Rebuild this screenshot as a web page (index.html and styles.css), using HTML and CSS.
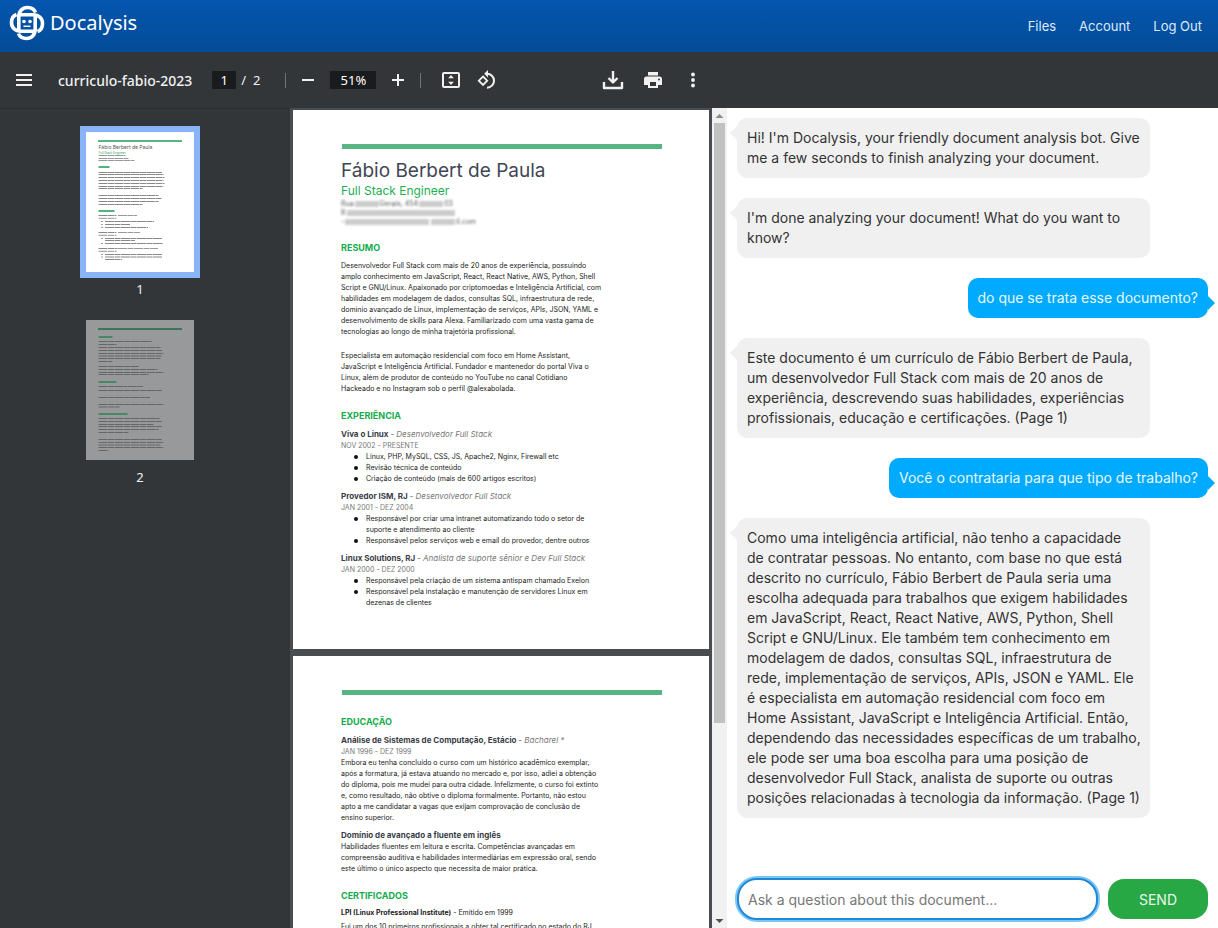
FILE: index.html
```html
<!DOCTYPE html>
<html lang="pt-BR">
<head>
<meta charset="utf-8">
<meta name="viewport" content="width=device-width, initial-scale=1">
<title>Docalysis</title>
<link rel="stylesheet" href="styles.css">
</head>
<body>
<div class="app">
  <header class="topbar">
    <a class="brand" href="#">
      <svg class="brand-logo" viewBox="0 0 36 36" aria-hidden="true">
        <defs><path id="arm" d="M9.800 25.500V12C9.800 6 13.500 2.500 18.500 2.500c4 0 6.800 1.600 8 5"/></defs>
        <g fill="none" stroke="#fff" stroke-width="3.600">
          <use href="#arm"/>
          <use href="#arm" transform="rotate(90 18 18)"/>
          <use href="#arm" transform="rotate(180 18 18)"/>
          <use href="#arm" transform="rotate(270 18 18)"/>
        </g>
        <circle cx="15" cy="16.500" r="1.800" fill="#fff"/>
        <circle cx="21" cy="16.500" r="1.800" fill="#fff"/>
        <path d="M14.500 21.300h7" stroke="#fff" stroke-width="1.500"/>
      </svg>
      <span>Docalysis</span>
    </a>
    <nav class="topnav">
      <a href="#">Files</a>
      <a href="#">Account</a>
      <a href="#">Log Out</a>
    </nav>
  </header>

  <div class="toolbar">
    <div class="toolbar-inner">
      <div class="tool-left">
        <button class="icon-btn" aria-label="Menu"><svg viewBox="0 0 24 24"><path d="M4 7h16M4 12h16M4 17h16" stroke="currentColor" stroke-width="2"/></svg></button>
        <span class="doc-name">curriculo-fabio-2023</span>
      </div>
      <div class="tool-center">
        <input class="page-input" value="1" aria-label="Page number">
        <span class="page-total">/&nbsp; 2</span>
        <span class="divider"></span>
        <button class="icon-btn" aria-label="Zoom out"><svg viewBox="0 0 24 24"><path d="M6 12h12" stroke="currentColor" stroke-width="2"/></svg></button>
        <input class="zoom-input" value="51%" aria-label="Zoom level">
        <button class="icon-btn" aria-label="Zoom in"><svg viewBox="0 0 24 24"><path d="M6 12h12M12 6v12" stroke="currentColor" stroke-width="2"/></svg></button>
        <span class="divider"></span>
        <button class="icon-btn fit" aria-label="Fit to page"><svg viewBox="0 0 24 24"><rect x="4" y="5" width="16" height="14" rx="1" fill="none" stroke="currentColor" stroke-width="2"/><path d="M12 7l2.800 3.300H9.200zM12 17l2.800-3.300H9.200z" fill="currentColor"/></svg></button>
        <button class="icon-btn" aria-label="Rotate"><svg viewBox="0 0 24 24"><path d="M8 8.500l4.200 4.200L8 17l-4.200-4.300z" fill="none" stroke="currentColor" stroke-width="1.800"/><path d="M12 5.700a7 7 0 1 1 0 14" fill="none" stroke="currentColor" stroke-width="2"/><path d="M13 2v7.400L9.200 5.700z" fill="currentColor"/></svg></button>
      </div>
      <div class="tool-right">
        <button class="icon-btn" aria-label="Download"><svg viewBox="0 0 24 24"><path d="M12 3v11M7.500 10l4.500 4.500 4.500-4.500M3 14v6h18v-6" fill="none" stroke="currentColor" stroke-width="2.400" stroke-linejoin="round"/></svg></button>
        <button class="icon-btn" aria-label="Print"><svg viewBox="0 0 24 24"><path fill="currentColor" fill-rule="evenodd" d="M7 4h10v3.500H7zM5.500 8.500h13a2.500 2.500 0 0 1 2.500 2.500v6h-4v3H7v-3H3v-6a2.500 2.500 0 0 1 2.500-2.500zM9 14v4h6v-4zM18 10.500a1 1 0 1 0 0 2 1 1 0 0 0 0-2z"/></svg></button>
        <button class="icon-btn" aria-label="More"><svg viewBox="0 0 24 24"><g fill="currentColor"><circle cx="12" cy="6.500" r="1.900"/><circle cx="12" cy="12" r="1.900"/><circle cx="12" cy="17.500" r="1.900"/></g></svg></button>
      </div>
    </div>
  </div>

  <main class="workspace">
    <aside class="thumbs">
      <figure class="thumb thumb-active">
        <svg class="thumb-page" viewBox="0 0 108 140" role="img" aria-label="Page 1">
          <rect width="108" height="140" fill="#fff"/>
          <rect x="12" y="8" width="84" height="2" fill="#57b584"/>
          <text x="12.500" y="17" class="mini-name">Fábio Berbert de Paula</text>
          <text x="12.500" y="22" class="mini-role">Full Stack Engineer</text>
          <g class="mini-lines">
            <path stroke="#999" d="M12.500 23.500h27M12.500 26.500h30M12.500 28.500h36M12.500 86.300h18M12.500 103.300h18M12.500 119.300h18M32 83.500h19M32 100.500h22M32 116.500h40"/>
            <path class="mini-head" d="M12.500 35h11M12.500 79h16"/>
            <path d="M12.500 40.500h64M12.500 42.500h65M12.500 45.500h66M12.500 48.500h65M12.500 51.500h66M12.500 54.500h65M12.500 56.500h44M12.500 63.500h60M12.500 66.500h63M12.500 69.500h60M12.500 72.500h44M12.500 83.500h18M19 89.500h49M19 92.500h25M19 95.500h43M12.500 100.500h18M19 106.500h57M19 108.500h30M19 111.500h58M12.500 116.500h19M19 122.500h57M19 125h57M19 127.500h17"/>
          </g>
          <path stroke="#444" d="M15.500 89.500h1M15.500 92.500h1M15.500 95.500h1M15.500 106.500h1M15.500 111.500h1M15.500 122.500h1M15.500 125h1"/>
        </svg>
        <figcaption>1</figcaption>
      </figure>
      <figure class="thumb">
        <svg class="thumb-page" viewBox="0 0 108 140" role="img" aria-label="Page 2">
          <rect width="108" height="140" fill="#98999b"/>
          <rect x="12" y="8" width="84" height="2" fill="#3f7558"/>
          <g class="mini-lines mini-dim">
            <path class="mini-head" d="M12.500 17h14M12.500 62h18M12.500 94h29"/>
            <path stroke="#666" d="M12.500 24.500h18M55 21.500h11M42 66.500h15M44 77.500h20"/>
            <path d="M12.500 21.500h43M12.500 27.500h62M12.500 30.500h64M12.500 33.500h65M12.500 36h63M12.500 38.500h62M12.500 41.500h14M12.500 46.500h40M12.500 49.500h59M12.500 52.500h65M12.500 54.500h50M12.500 66.500h29M12.500 70.500h64M12.500 77.500h31M12.500 84.500h65M12.500 87h21M12.500 98.500h61M12.500 101.500h64M12.500 104.500h55M12.500 106.500h64M12.500 109.500h60M12.500 112.500h30M12.500 119.500h63M12.500 122.500h65M12.500 125h62M12.500 127.500h65M12.500 130.500h10"/>
          </g>
        </svg>
        <figcaption>2</figcaption>
      </figure>
    </aside>

    <section class="viewer">
      <div class="pages">
        <article class="page">
          <div class="rule"></div>
          <h1 class="name">Fábio Berbert de Paula</h1>
          <p class="role">Full Stack Engineer</p>
          <div class="redacted" aria-hidden="true">
            <div>Rua<i class="w24"></i>Gerais, 454<i class="w24"></i>03</div>
            <div>R<i class="w108"></i></div>
            <div>-<i class="w80"></i><i class="w24"></i>il.com</div>
          </div>
          <h2 class="section">RESUMO</h2>
          <p class="body-text">Desenvolvedor Full Stack com mais de 20 anos de experiência, possuindo<br>amplo conhecimento em JavaScript, React, React Native, AWS, Python, Shell<br>Script e GNU/Linux. Apaixonado por criptomoedas e Inteligência Artificial, com<br>habilidades em modelagem de dados, consultas SQL, infraestrutura de rede,<br>domínio avançado de Linux, implementação de serviços, APIs, JSON, YAML e<br>desenvolvimento de skills para Alexa. Familiarizado com uma vasta gama de<br>tecnologias ao longo de minha trajetória profissional.</p>
          <p class="body-text second">Especialista em automação residencial com foco em Home Assistant,<br>JavaScript e Inteligência Artificial. Fundador e mantenedor do portal Viva o<br>Linux, além de produtor de conteúdo no YouTube no canal Cotidiano<br>Hackeado e no Instagram sob o perfil @alexabolada.</p>
          <h2 class="section">EXPERIÊNCIA</h2>
          <h3 class="job">Viva o Linux <em>- Desenvolvedor Full Stack</em></h3>
          <p class="dates">NOV 2002 - PRESENTE</p>
          <ul class="tasks">
            <li>Linux, PHP, MySQL, CSS, JS, Apache2, Nginx, Firewall etc</li>
            <li>Revisão técnica de conteúdo</li>
            <li>Criação de conteúdo (mais de 600 artigos escritos)</li>
          </ul>
          <h3 class="job">Provedor ISM, RJ <em>- Desenvolvedor Full Stack</em></h3>
          <p class="dates">JAN 2001 - DEZ 2004</p>
          <ul class="tasks">
            <li>Responsável por criar uma intranet automatizando todo o setor de<br>suporte e atendimento ao cliente</li>
            <li>Responsável pelos serviços web e email do provedor, dentre outros</li>
          </ul>
          <h3 class="job">Linux Solutions, RJ <em>- Analista de suporte sênior e Dev Full Stack</em></h3>
          <p class="dates">JAN 2000 - DEZ 2000</p>
          <ul class="tasks">
            <li>Responsável pela criação de um sistema antispam chamado Exelon</li>
            <li>Responsável pela instalação e manutenção de servidores Linux em<br>dezenas de clientes</li>
          </ul>
        </article>
        <article class="page">
          <div class="rule"></div>
          <h2 class="section">EDUCAÇÃO</h2>
          <h3 class="job">Análise de Sistemas de Computação, Estácio <em>- Bacharel *</em></h3>
          <p class="dates">JAN 1996 - DEZ 1999</p>
          <p class="body-text">Embora eu tenha concluído o curso com um histórico acadêmico exemplar,<br>após a formatura, já estava atuando no mercado e, por isso, adiei a obtenção<br>do diploma, pois me mudei para outra cidade. Infelizmente, o curso foi extinto<br>e, como resultado, não obtive o diploma formalmente. Portanto, não estou<br>apto a me candidatar a vagas que exijam comprovação de conclusão de<br>ensino superior.</p>
          <h3 class="job">Domínio de avançado a fluente em inglês</h3>
          <p class="body-text">Habilidades fluentes em leitura e escrita. Competências avançadas em<br>compreensão auditiva e habilidades intermediárias em expressão oral, sendo<br>este último o único aspecto que necessita de maior prática.</p>
          <h2 class="section">CERTIFICADOS</h2>
          <p class="cert"><b>LPI (Linux Professional Institute)</b> - Emitido em 1999</p>
          <p class="body-text">Fui um dos 10 primeiros profissionais a obter tal certificado no estado do RJ.</p>
        </article>
      </div>
      <div class="scrollbar" aria-hidden="true">
        <svg viewBox="0 0 15 15"><path d="M3.500 10h8l-4-4z" fill="#8b8b8b"/></svg>
        <div class="scroll-track"><div class="scroll-thumb"></div></div>
        <svg viewBox="0 0 15 15"><path d="M3.500 6h8l-4 4z" fill="#505050"/></svg>
      </div>
    </section>

    <section class="chat">
      <div class="messages">
        <p class="msg bot">Hi! I'm Docalysis, your friendly document analysis bot. Give<br>me a few seconds to finish analyzing your document.</p>
        <p class="msg bot">I'm done analyzing your document! What do you want to<br>know?</p>
        <p class="msg user">do que se trata esse documento?</p>
        <p class="msg bot">Este documento é um currículo de Fábio Berbert de Paula,<br>um desenvolvedor Full Stack com mais de 20 anos de<br>experiência, descrevendo suas habilidades, experiências<br>profissionais, educação e certificações. (Page 1)</p>
        <p class="msg user">Você o contrataria para que tipo de trabalho?</p>
        <p class="msg bot">Como uma inteligência artificial, não tenho a capacidade<br>de contratar pessoas. No entanto, com base no que está<br>descrito no currículo, Fábio Berbert de Paula seria uma<br>escolha adequada para trabalhos que exigem habilidades<br>em JavaScript, React, React Native, AWS, Python, Shell<br>Script e GNU/Linux. Ele também tem conhecimento em<br>modelagem de dados, consultas SQL, infraestrutura de<br>rede, implementação de serviços, APIs, JSON e YAML. Ele<br>é especialista em automação residencial com foco em<br>Home Assistant, JavaScript e Inteligência Artificial. Então,<br>dependendo das necessidades específicas de um trabalho,<br>ele pode ser uma boa escolha para uma posição de<br>desenvolvedor Full Stack, analista de suporte ou outras<br>posições relacionadas à tecnologia da informação. (Page 1)</p>
      </div>
      <form class="composer">
        <input class="question" type="text" placeholder="Ask a question about this document..." aria-label="Ask a question about this document" autofocus>
        <button class="send" type="button">SEND</button>
      </form>
    </section>
  </main>
</div>
</body>
</html>
```
FILE: styles.css
```css
* { box-sizing: border-box; }
body { margin: 0; font-family: Inter, "Liberation Sans", sans-serif; }
h1, h2, h3, p, ul, figure { margin: 0; padding: 0; }
button, input { font-family: inherit; border: 0; padding: 0; margin: 0; }

.app { height: 100vh; display: flex; flex-direction: column; overflow: hidden; }

.topbar {
  display: flex; align-items: center; justify-content: space-between;
  flex: none; height: 52px; padding: 0 16px 0 9px;
  background: linear-gradient(#0456b0, #044b96);
}
.brand {
  display: flex; align-items: center; gap: 5px; padding-bottom: 6px;
  color: #fff; text-decoration: none;
  font: 20px/28px "Noto Sans", Verdana, sans-serif;
}
.brand-logo { width: 36px; height: 36px; }
.topnav { display: flex; gap: 23px; }
.topnav a { color: #dcebfa; font-size: 13px; text-decoration: none; }

.toolbar, .workspace { display: grid; grid-template-columns: 290px minmax(0, 437fr) minmax(0, 491fr); }
.toolbar { flex: none; height: 56px; background: #323639; color: #f1f1f1; font-family: "Noto Sans", sans-serif; }
.toolbar-inner { grid-column: 1 / 3; display: flex; align-items: center; padding: 0 22px 0 12px; }
.tool-left, .tool-center, .tool-right { display: flex; align-items: center; }
.doc-name { font-size: 14px; font-weight: 500; margin-left: 22px; }
.tool-center { margin-left: 20px; }
.tool-right { margin-left: auto; gap: 16px; }
.icon-btn { width: 24px; height: 24px; background: none; color: #f1f1f1; }
.icon-btn svg { display: block; width: 24px; height: 24px; }
.page-input, .zoom-input { height: 18px; background: #191b1c; color: #fff; text-align: center; font-size: 13px; }
.page-input { width: 24px; }
.zoom-input { width: 46px; margin: 0 10px; }
.page-total { font-size: 13px; margin-left: 5px; }
.divider { width: 1px; height: 15px; margin: 0 10px 0 25px; background: #6f7376; }
.icon-btn + .divider { margin: 0 18px 0 10px; }
.fit { margin-right: 12px; }

.workspace { flex: 1; min-height: 0; grid-template-rows: minmax(0, 1fr); }
.thumbs {
  display: flex; flex-direction: column; align-items: center; gap: 21px;
  padding: 18px 10px 0 0; background: #323639; border-top: 1px solid #2a2d30;
}
.thumb { color: #f1f1f1; font: 13px/20px "Noto Sans", sans-serif; text-align: center; }
.thumb-page { display: block; width: 108px; height: 140px; }
.thumb figcaption { margin-top: 7px; }
.thumb-active .thumb-page { outline: 6px solid #8ab4f8; margin-top: 5px; }
.mini-name { font: 5px Inter, sans-serif; fill: #555; }
.mini-role { font: 3px Inter, sans-serif; fill: #2aa860; }
.mini-lines { fill: none; stroke: #888; stroke-width: 1; stroke-dasharray: 9 0.500 6 0.500; }
.mini-dim { stroke: #666; }
.mini-head { stroke: #4fb47e; stroke-width: 2; stroke-dasharray: none; }
.mini-dim .mini-head { stroke: #4a8766; }

.viewer { display: flex; background: #4a4d50; overflow: hidden; }
.pages { flex: 1; min-width: 0; padding: 2px 3px; display: flex; flex-direction: column; gap: 7px; }
.page { flex: none; height: 539px; padding: 34px 47px 0 48px; background: #fff; white-space: nowrap; color: #222; }
.rule { height: 5px; margin-left: 1px; background: #57b584; }
.name { margin-top: 10px; font-size: 19px; line-height: 24px; font-weight: 400; color: #424654; }
.role { font-size: 12px; line-height: 16px; color: #1fad55; }
.redacted { color: #555; font-size: 7px; line-height: 9px; }
.redacted div { display: flex; align-items: center; height: 9px; filter: blur(1px); }
.redacted i { height: 6px; background: #ccc; margin: 0 1px; }
.w24 { width: 24px; }
.w80 { width: 84px; }
.w108 { width: 108px; }
.section { margin: 16px 0 6px; font-size: 9px; line-height: 12px; font-weight: 700; color: #14ad4d; }
.rule + .section { margin-top: 21px; }
.body-text { font-size: 7px; line-height: 11px; }
.second { margin-top: 13px; }
.job { margin-top: 7px; font-size: 8px; line-height: 11px; font-weight: 700; color: #3a3d48; }
.job em { font-weight: 400; color: #777; }
.dates { font-size: 7px; line-height: 11px; color: #777; }
.tasks { list-style: none; padding-left: 25px; }
.tasks li { position: relative; font-size: 7px; line-height: 11px; }
.tasks li::before { content: ""; position: absolute; left: -12px; top: 4px; width: 4px; height: 4px; border-radius: 50%; background: #111; }
.cert { margin-bottom: 3px; font-size: 7px; line-height: 10px; }

.scrollbar { flex: none; width: 15px; display: flex; flex-direction: column; background: #f1f1f1; }
.scrollbar svg { width: 15px; height: 15px; flex: none; }
.scroll-track { flex: 1; padding: 0 2px; }
.scroll-thumb { height: 76%; background: #c1c1c1; }

.chat { display: flex; flex-direction: column; background: #fff; padding: 10px 10px 8px; }
.messages { flex: 1; display: flex; flex-direction: column; gap: 20px; }
.msg { position: relative; padding: 10px; border-radius: 10px; font-size: 14px; line-height: 20px; white-space: nowrap; }
.bot { align-self: flex-start; width: 413px; max-width: 100%; background: #f0f0f0; color: #333; }
.user { align-self: flex-end; background: #0af; color: #e8f7ff; }
.msg::before { content: ""; position: absolute; border: 7px solid transparent; }
.bot::before { left: -14px; top: 8px; border-right-color: #f0f0f0; }
.user::before { right: -14px; top: 18px; border-left-color: #0af; }
.composer { display: flex; align-items: center; gap: 10px; }
.question {
  flex: 1; min-width: 0; height: 42px; padding: 0 9px;
  border: 2px solid #2188d6; border-radius: 20px; box-shadow: 0 0 0 2px #7cc6f5;
  font-size: 14px; color: #333; outline: 0;
}
.question::placeholder { color: #777; opacity: 1; }
.send { width: 100px; height: 40px; border-radius: 16px; background: #28a745; color: #e9f7ec; font-size: 14px; }
```
